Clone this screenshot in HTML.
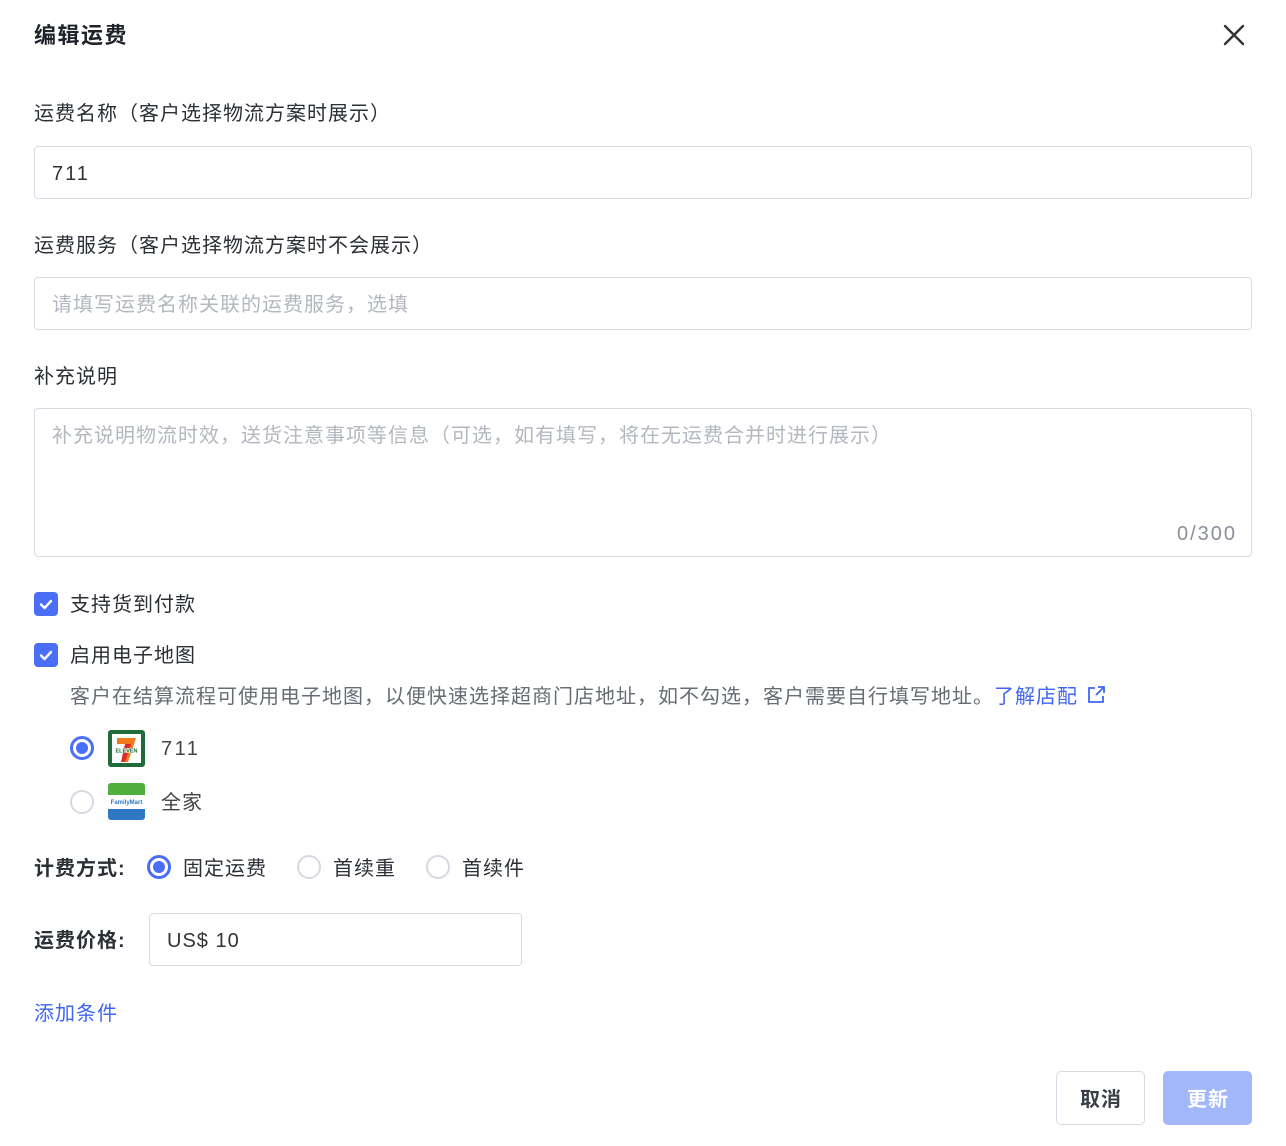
<!DOCTYPE html>
<html><head><meta charset="utf-8"><style>
*{margin:0;padding:0;box-sizing:border-box}
body{width:1286px;height:1146px;background:#fff;position:relative;font-family:"Liberation Sans","Noto Sans CJK SC",sans-serif;color:#2b2f36;overflow:hidden}
.a{position:absolute;white-space:nowrap}
.t{font-size:20px;line-height:24px;letter-spacing:1px;margin-top:1px}
.box{position:absolute;border:1px solid #d8dbe3;border-radius:4px;background:#fff}
.ph{color:#b3b7c0}
.cb{position:absolute;width:24px;height:24px;border-radius:4px;background:#4a6ef5}
.rd{position:absolute;width:24px;height:24px;border-radius:50%;border:2px solid #d6d9e3;background:#fff}
.rd.on{border:3px solid #4a6ef5}
.rd.on::after{content:"";position:absolute;left:3px;top:3px;width:12px;height:12px;border-radius:50%;background:#4a6ef5}
.blue{color:#3f66f0}
</style></head><body>
<div class="a" style="left:34px;top:22px;font-size:22px;line-height:28px;font-weight:bold;color:#1f2329;letter-spacing:1.5px">编辑运费</div>
<svg class="a" style="left:1222px;top:23px" width="24" height="24" viewBox="0 0 24 24"><path d="M3 3L21 21M21 3L3 21" stroke="#333" stroke-width="2.4" stroke-linecap="round"/></svg>

<div class="a t" style="left:34px;top:101px">运费名称（客户选择物流方案时展示）</div>
<div class="box" style="left:34px;top:146px;width:1218px;height:53px"></div>
<div class="a t" style="left:52px;top:161px;color:#333;letter-spacing:2px">711</div>

<div class="a t" style="left:34px;top:233px">运费服务（客户选择物流方案时不会展示）</div>
<div class="box" style="left:34px;top:277px;width:1218px;height:53px"></div>
<div class="a t ph" style="left:52px;top:292px">请填写运费名称关联的运费服务，选填</div>

<div class="a t" style="left:34px;top:364px">补充说明</div>
<div class="box" style="left:34px;top:408px;width:1218px;height:149px"></div>
<div class="a t ph" style="left:52px;top:423px">补充说明物流时效，送货注意事项等信息（可选，如有填写，将在无运费合并时进行展示）</div>
<div class="a t" style="left:1177px;top:521px;color:#8a8f99;letter-spacing:2px">0/300</div>

<div class="cb" style="left:34px;top:592px"><svg width="24" height="24"><path d="M7 12.5l3.5 3.5L17 9" stroke="#fff" stroke-width="2.4" fill="none" stroke-linecap="round" stroke-linejoin="round"/></svg></div>
<div class="a t" style="left:70px;top:592px">支持货到付款</div>
<div class="cb" style="left:34px;top:643px"><svg width="24" height="24"><path d="M7 12.5l3.5 3.5L17 9" stroke="#fff" stroke-width="2.4" fill="none" stroke-linecap="round" stroke-linejoin="round"/></svg></div>
<div class="a t" style="left:70px;top:643px">启用电子地图</div>
<div class="a t" style="left:70px;top:684px;color:#676c75">客户在结算流程可使用电子地图，以便快速选择超商门店地址，如不勾选，客户需要自行填写地址。<span class="blue">了解店配</span></div>
<svg class="a" style="left:1086px;top:685px" width="20" height="20" viewBox="0 0 20 20"><path d="M9 3H3v14h14v-6M12 2h6v6M18 2l-8 8" stroke="#3f66f0" stroke-width="1.8" fill="none"/></svg>

<div class="rd on" style="left:70px;top:736px"></div>
<svg class="a" style="left:108px;top:730px" width="37" height="37" viewBox="0 0 37 37"><rect width="37" height="37" rx="3" fill="#1f6b3a"/><rect x="4" y="4" width="29" height="29" fill="#fff"/><path d="M9 8h19l-8 24h-5l6-18H9z" fill="#f07a1c"/><path d="M17 14h6l-6 18h-4z" fill="#e02a2a"/><rect x="5" y="18" width="27" height="5" fill="#fff" opacity=".85"/><text x="18.5" y="22.5" font-size="5.5" font-weight="bold" text-anchor="middle" fill="#1f6b3a" font-family="Liberation Sans">ELEVEN</text></svg>
<div class="a t" style="left:161px;top:736px;letter-spacing:2.5px;color:#444">711</div>

<div class="rd" style="left:70px;top:790px"></div>
<svg class="a" style="left:108px;top:783px" width="37" height="37" viewBox="0 0 37 37"><rect width="37" height="37" rx="3" fill="#fff"/><path d="M0 3a3 3 0 0 1 3-3h31a3 3 0 0 1 3 3v9H0z" fill="#4fae3c"/><path d="M0 26h37v8a3 3 0 0 1-3 3H3a3 3 0 0 1-3-3z" fill="#2f78c4"/><text x="18.5" y="21" font-size="6" font-weight="bold" text-anchor="middle" fill="#2f78c4" font-family="Liberation Sans">FamilyMart</text></svg>
<div class="a t" style="left:161px;top:790px;color:#444">全家</div>

<div class="a t" style="left:34px;top:856px;font-weight:bold">计费方式:</div>
<div class="rd on" style="left:147px;top:855px"></div>
<div class="a t" style="left:183px;top:856px">固定运费</div>
<div class="rd" style="left:297px;top:855px"></div>
<div class="a t" style="left:333px;top:856px">首续重</div>
<div class="rd" style="left:426px;top:855px"></div>
<div class="a t" style="left:462px;top:856px">首续件</div>

<div class="a t" style="left:34px;top:928px;font-weight:bold">运费价格:</div>
<div class="box" style="left:149px;top:913px;width:373px;height:53px"></div>
<div class="a t" style="left:167px;top:928px;color:#333">US$ 10</div>

<div class="a t blue" style="left:34px;top:1001px">添加条件</div>

<div class="box" style="left:1056px;top:1071px;width:89px;height:54px;border-radius:5px"></div>
<div class="a t" style="left:1080px;top:1087px;font-weight:bold;color:#3a3f48">取消</div>
<div class="a" style="left:1163px;top:1071px;width:89px;height:54px;border-radius:5px;background:#a3b7fb"></div>
<div class="a t" style="left:1187px;top:1087px;font-weight:bold;color:#fff">更新</div>
</body></html>
